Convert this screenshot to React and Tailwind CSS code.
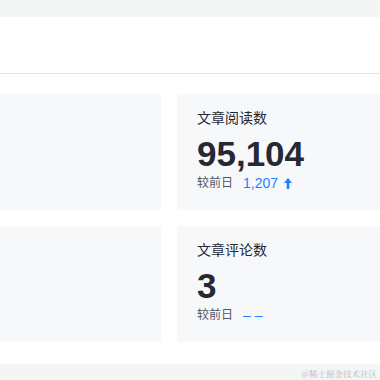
const font = { fontFamily: '"Liberation Sans", "Noto Sans CJK SC", sans-serif' };

function StatCard({ title, value, delta, up }) {
  return (
    <div className="bg-[#f7f8fa] h-[116px] pl-5 pt-[13px]">
      <div className="text-[14px] leading-[22px] text-[#252933]">{title}</div>
      <div className="mt-[7px] text-[35px] leading-none font-bold text-[#252933]">{value}</div>
      <div className="mt-[2px] flex items-center text-[12px] leading-5 text-[#515767]">
        <span>较前日</span>
        <span className="ml-[10px] text-[14px] text-[#1e80ff]">{delta}</span>
        {up && (
          <svg className="ml-[6px]" width="8" height="11" viewBox="0 0 8 11">
            <path d="M4 0 L8 5 L5.3 5 L5.3 11 L2.7 11 L2.7 5 L0 5 Z" fill="#1e80ff" />
          </svg>
        )}
      </div>
    </div>
  );
}

export default function App() {
  return (
    <div className="relative w-[380px] h-[380px] overflow-hidden bg-white" style={font}>
      <div className="h-[17px] bg-[#f4f5f5]" />
      <div className="h-[57px] bg-white border-b border-[#e4e6eb]" />
      <div className="pt-5 pb-[22px] grid grid-cols-[161px_1fr] gap-4">
        <div className="bg-[#f7f8fa] h-[116px]" />
        <StatCard title="文章阅读数" value="95,104" delta="1,207" up />
        <div className="bg-[#f7f8fa] h-[116px]" />
        <StatCard title="文章评论数" value="3" delta="– –" />
      </div>
      <div className="h-[17px] bg-[#f4f5f5]" />
      <div
        className="absolute right-[3px] bottom-[3px] text-[8.5px] leading-none text-[#b9bcc2]"
        style={{ fontFamily: '"Noto Serif CJK SC", "Noto Sans CJK SC", serif' }}
      >
        @稀土掘金技术社区
      </div>
    </div>
  );
}
